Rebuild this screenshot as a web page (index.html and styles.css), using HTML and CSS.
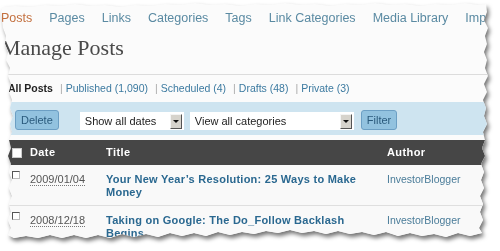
FILE: index.html
```html
<!DOCTYPE html>
<html lang="en">

<head>
  <meta charset="UTF-8">
  <meta name="viewport" content="width=device-width, initial-scale=1.0">
  <title>Manage Posts</title>

  <link rel="stylesheet" href="styles.css">
</head>

<body>
  <div class="shot">
    <div class="paper">
      <ul class="menu">
        <li class="current">Posts</li>
        <li>Pages</li>
        <li>Links</li>
        <li>Categories</li>
        <li>Tags</li>
        <li>Link Categories</li>
        <li>Media Library</li>
        <li>Import</li>
      </ul>

      <h2>Manage Posts</h2>

      <ul class="subsub">
        <li class="on">All Posts</li>
        <li>Published (1,090)</li>
        <li>Scheduled (4)</li>
        <li>Drafts (48)</li>
        <li>Private (3)</li>
      </ul>

      <div class="tablenav">
        <a class="btn" href="#">Delete</a>
        <div class="select dates">
          <span>Show all dates</span>
          <span class="arrow"></span>
        </div>
        <div class="select cats">
          <span>View all categories</span>
          <span class="arrow"></span>
        </div>
        <a class="btn filter" href="#">Filter</a>
      </div>

      <table class="posts">
        <colgroup>
          <col class="c-cb">
          <col class="c-date">
          <col class="c-title">
          <col class="c-author">
          <col class="c-cat">
        </colgroup>
        <thead>
          <tr>
            <th><span class="box head-box"></span></th>
            <th>Date</th>
            <th>Title</th>
            <th>Author</th>
            <th>Tags</th>
          </tr>
        </thead>
        <tbody>
          <tr>
            <td><span class="box"></span></td>
            <td><abbr>2009/01/04</abbr></td>
            <td class="title"><a href="#">Your New Year’s Resolution: 25 Ways to Make Money</a></td>
            <td class="author">InvestorBlogger</td>
            <td class="cat">Tips</td>
          </tr>
          <tr>
            <td><span class="box"></span></td>
            <td><abbr>2008/12/18</abbr></td>
            <td class="title"><a href="#">Taking on Google: The Do_Follow Backlash Begins</a></td>
            <td class="author">InvestorBlogger</td>
            <td class="cat">Tips</td>
          </tr>
        </tbody>
      </table>
    </div>
  </div>
</body>

</html>
```

FILE: styles.css
```css
* {
  margin: 0;
  padding: 0;
  box-sizing: border-box;
}

html,
body {
  background-color: #fff;
}

body {
  font-family: "Liberation Sans", Arial, sans-serif;
  color: #333;
}

li {
  list-style: none;
}

a {
  text-decoration: none;
}

/* torn paper look */
.shot {
  width: 500px;
  height: 251px;
  filter: drop-shadow(2px 3px 2px rgba(0, 0, 0, 0.55));
}

.paper {
  height: 251px;
  overflow: hidden;
  background-color: #fbfbfb;
  clip-path: polygon(2px 7px, 15px 6px, 30px 7px, 45px 5px, 60px 6px, 75px 4px, 90px 6px, 105px 5px, 120px 7px, 135px 5px, 150px 6px, 165px 4px, 180px 5px, 195px 3px, 210px 5px, 225px 4px, 240px 6px, 255px 4px, 270px 5px, 285px 3px, 300px 5px, 315px 4px, 330px 6px, 345px 4px, 360px 5px, 375px 3px, 390px 5px, 405px 4px, 420px 6px, 435px 4px, 450px 5px, 465px 3px, 478px 5px, 486px 4px,
      487px 12px, 484px 20px, 488px 28px, 485px 36px, 487px 44px, 484px 52px, 487px 60px, 485px 68px, 488px 76px, 484px 84px, 487px 92px, 483px 100px, 486px 108px, 484px 116px, 487px 124px, 483px 132px, 485px 140px, 482px 148px, 485px 156px, 481px 164px, 484px 172px, 481px 180px, 484px 188px, 480px 196px, 483px 204px, 480px 212px, 483px 220px, 479px 228px, 482px 233px,
      470px 236px, 458px 233px, 446px 237px, 434px 234px, 422px 236px, 410px 233px, 398px 236px, 386px 232px, 374px 235px, 362px 232px, 350px 234px, 338px 231px, 326px 234px, 314px 231px, 302px 233px, 290px 230px, 278px 233px, 266px 231px, 254px 234px, 242px 232px, 230px 235px, 218px 232px, 206px 236px, 194px 233px, 182px 236px, 170px 233px, 158px 237px, 146px 234px, 134px 237px, 122px 234px, 110px 238px, 98px 235px, 86px 238px, 74px 235px, 62px 238px, 50px 235px, 38px 238px, 26px 236px, 14px 238px, 8px 235px,
      11px 228px, 8px 220px, 11px 212px, 9px 204px, 12px 196px, 9px 188px, 12px 180px, 9px 172px, 11px 164px, 8px 156px, 11px 148px, 9px 140px, 12px 132px, 10px 124px, 13px 116px, 10px 108px, 12px 100px, 9px 92px, 11px 84px, 8px 76px, 10px 68px, 6px 60px, 8px 52px, 5px 44px, 6px 36px, 3px 28px, 2px 20px, 1px 12px);
}

/* top menu */
.menu {
  display: flex;
  gap: 17px;
  padding-top: 11px;
  margin-left: 1px;
  font-size: 12.5px;
  line-height: 14px;
  color: #5a8aa2;
  white-space: nowrap;
}

.menu .current {
  color: #c3703f;
}

h2 {
  margin-top: 9px;
  padding: 0 0 12px 1px;
  border-bottom: 1px solid #dcdcdc;
  font-family: "Liberation Serif", "Times New Roman", serif;
  font-size: 22px;
  font-weight: normal;
  line-height: 28px;
  color: #4a4a4a;
}

/* status links */
.subsub {
  display: flex;
  margin-top: 6px;
  padding-left: 8px;
  font-size: 10.5px;
  line-height: 14px;
  color: #3c7aa0;
  white-space: nowrap;
}

.subsub li+li::before {
  content: "|";
  margin: 0 3px 0 7px;
  color: #aaa;
}

.subsub .on {
  font-weight: bold;
  color: #222;
}

/* filter bar */
.tablenav {
  display: flex;
  align-items: flex-start;
  height: 33px;
  margin-top: 7px;
  padding: 8px 0 0 15px;
  background-color: #cee4f0;
}

.btn {
  height: 20px;
  padding: 0 5px;
  border: 1px solid #6c9fc4;
  border-radius: 3px;
  background-color: #92c2df;
  font-size: 11px;
  line-height: 18px;
  color: #2a5a7c;
}

.btn.filter {
  margin-left: 7px;
}

.select {
  display: flex;
  align-items: center;
  height: 18px;
  margin-top: 2px;
  padding: 0 2px 0 5px;
  background-color: #fff;
  font-size: 11px;
  color: #222;
}

.select.dates {
  width: 104px;
  margin-left: 21px;
}

.select.cats {
  width: 164px;
  margin-left: 6px;
}

.arrow {
  width: 12px;
  height: 15px;
  margin-left: auto;
  border: 1px solid;
  border-color: #f4f4f4 #555 #555 #f4f4f4;
  background-color: #d6d3cc;
  position: relative;
}

.arrow::after {
  content: "";
  position: absolute;
  left: 2px;
  top: 5px;
  border-left: 3px solid transparent;
  border-right: 3px solid transparent;
  border-top: 3px solid #111;
}

/* posts table */
.posts {
  width: 585px;
  margin-top: 5px;
  border-collapse: collapse;
  table-layout: fixed;
  background-color: #f9f9f9;
}

.c-cb {
  width: 28px;
}

.c-date {
  width: 76px;
}

.c-title {
  width: 281px;
}

.c-author {
  width: 100px;
}

.c-cat {
  width: 100px;
}

.posts th {
  height: 25px;
  padding-left: 2px;
  background-color: #464646;
  font-size: 11px;
  line-height: 25px;
  letter-spacing: 0.4px;
  text-align: left;
  color: #fff;
  white-space: nowrap;
}

.posts td {
  padding: 8px 0 6px 2px;
  border-bottom: 1px solid #dfdfdf;
  font-size: 11px;
  line-height: 13px;
  vertical-align: top;
  color: #555;
}

.posts th:first-child,
.posts td:first-child {
  padding-left: 12px;
}

abbr {
  border-bottom: 1px dotted #777;
}

.title {
  padding-right: 20px !important;
}

.title a {
  font-weight: bold;
  letter-spacing: 0.25px;
  color: #2a6890;
}

.author {
  font-size: 10.5px !important;
  color: #4a7c99 !important;
  white-space: nowrap;
}

.cat {
  color: #3c7aa0 !important;
}

.box {
  display: block;
  width: 8px;
  height: 8px;
  margin-top: -2px;
  border: 1px solid;
  border-color: #555 #bbb #bbb #555;
  background-color: #fff;
}

.head-box {
  width: 10px;
  height: 10px;
  margin-top: 0;
  border-color: #ccc;
}
```
